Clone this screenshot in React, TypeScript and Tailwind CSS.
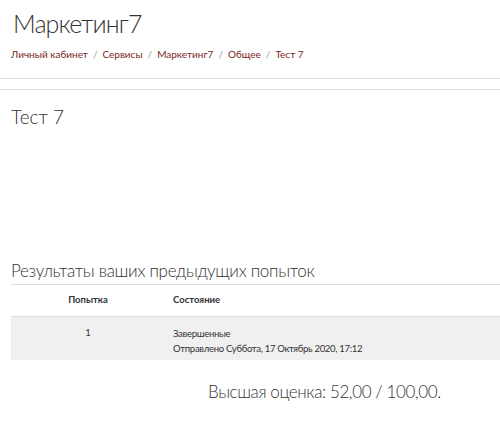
import React from 'react';

const crumbs = ['Личный кабинет', 'Сервисы', 'Маркетинг7', 'Общее', 'Тест 7'];

const App = () => {
    return (
        <div className="bg-white w-[500px] h-[433px] overflow-hidden text-[#333] font-['Lato',sans-serif]">
            <div className="px-[11px] pt-[5px]">
                <h1 className="pl-[2px] text-[25px] font-light leading-[36px] tracking-[-0.9px] text-[#333]">Маркетинг7</h1>
                <div className="flex items-center mt-[6px] text-[10px] leading-[14px]">
                    {crumbs.map((c, i) => (
                        <React.Fragment key={i}>
                            {i > 0 && <span className="text-[#999] mx-[5px]">/</span>}
                            <span className="text-[#7b1e1e]">{c}</span>
                        </React.Fragment>
                    ))}
                </div>
            </div>

            <div className="mt-[17px] border-t border-[#ddd]"></div>
            <div className="mt-[10px] border-t border-[#ddd]"></div>

            <div className="pl-[11px]">
                <h2 className="mt-[15px] text-[19px] font-light leading-[24px] text-[#333]">Тест 7</h2>

                <h3 className="mt-[130px] text-[17px] font-light leading-[24px] tracking-[-0.3px] text-[#333]">Результаты ваших предыдущих попыток</h3>
                <div className="mt-[1px] border-t border-[#ddd]"></div>

                <table className="w-full text-[9.5px] border-collapse">
                    <thead>
                        <tr className="border-b border-[#ddd]">
                            <th className="w-[154px] h-[31px] text-center font-bold">Попытка</th>
                            <th className="text-left font-bold px-[8px]">Состояние</th>
                        </tr>
                    </thead>
                    <tbody>
                        <tr className="bg-[#f0f0f0]">
                            <td className="h-[44px] text-center align-top pt-[9px]">1</td>
                            <td className="px-[8px] align-top pt-[9px] leading-[15px] tracking-[-0.3px]">
                                <div>Завершенные</div>
                                <div>Отправлено Суббота, 17 Октябрь 2020, 17:12</div>
                            </td>
                        </tr>
                    </tbody>
                </table>

                <div className="mt-[20px] pl-[197px] text-[17px] font-light leading-[24px] tracking-[-0.4px] text-[#333]">
                    Высшая оценка: 52,00 / 100,00.
                </div>
            </div>
        </div>
    );
};

export default App;
